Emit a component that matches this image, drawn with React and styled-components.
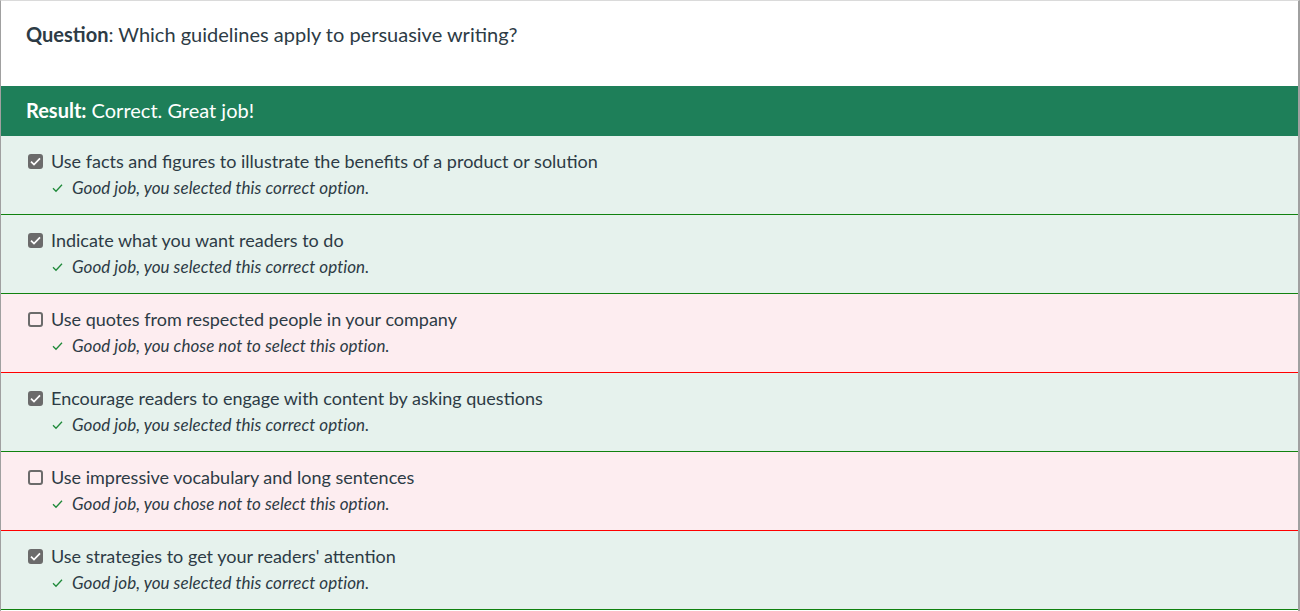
import React from "react";
import styled, { createGlobalStyle } from "styled-components";

const GlobalStyle = createGlobalStyle`
  html, body {
    margin: 0;
    padding: 0;
    background: #ffffff;
    font-family: Lato, "Noto Sans", sans-serif;
    color: #2d3b45;
  }
`;

const Card = styled.div`
  width: 1300px;
  height: 611px;
  box-sizing: border-box;
  border-top: 1px solid #dadada;
  border-left: 1px solid #a0a0a0;
  border-right: 2px solid #a0a0a0;
  display: flex;
  flex-direction: column;
`;

const QuestionBar = styled.div`
  height: 85px;
  box-sizing: border-box;
  padding: 21px 25px 0;
  font-size: 20px;
  line-height: 24px;
  background: #ffffff;
`;

const ResultBar = styled.div`
  height: 50px;
  box-sizing: border-box;
  padding: 0 25px 3px;
  display: flex;
  align-items: center;
  background: #1e7f59;
  color: #ffffff;
  font-size: 20px;
`;

const Row = styled.div`
  height: 79px;
  box-sizing: border-box;
  padding: 13px 25px 0 27px;
  background: ${({ $ok }) => ($ok ? "#e6f2ed" : "#fdedf0")};
  border-bottom: 1px solid ${({ $ok }) => ($ok ? "#11820f" : "#ff0000")};
`;

const OptionLine = styled.div`
  display: flex;
  align-items: center;
  gap: 8px;
  font-size: 18px;
  line-height: 24px;
`;

const Box = styled.span`
  width: 15px;
  height: 15px;
  box-sizing: border-box;
  border-radius: 3px;
  border: 2px solid #6b6b6b;
  background: ${({ $checked }) => ($checked ? "#6b6b6b" : "transparent")};
  display: flex;
  align-items: center;
  justify-content: center;
  flex: none;
`;

const Feedback = styled.div`
  display: flex;
  align-items: center;
  gap: 9px;
  margin-top: 4px;
  padding-left: 24px;
  font-size: 17px;
  letter-spacing: 0.05px;
  line-height: 22px;
  font-style: italic;
`;

const options = [
  { text: "Use facts and figures to illustrate the benefits of a product or solution", checked: true, ok: true },
  { text: "Indicate what you want readers to do", checked: true, ok: true },
  { text: "Use quotes from respected people in your company", checked: false, ok: false },
  { text: "Encourage readers to engage with content by asking questions", checked: true, ok: true },
  { text: "Use impressive vocabulary and long sentences", checked: false, ok: false },
  { text: "Use strategies to get your readers' attention", checked: true, ok: true },
];

const Tick = () => (
  <svg width="11" height="9" viewBox="0 0 11 9">
    <polyline points="1,4.6 4,7.6 10,1.4" fill="none" stroke="#fff" strokeWidth="1.7" />
  </svg>
);

const GreenTick = () => (
  <svg width="11" height="10" viewBox="0 0 11 10">
    <polyline points="1,5.2 4,8.2 10,1.8" fill="none" stroke="#1f8a3a" strokeWidth="1.3" />
  </svg>
);

export default function App() {
  return (
    <>
      <GlobalStyle />
      <Card>
        <QuestionBar>
          <b>Question</b>: Which guidelines apply to persuasive writing?
        </QuestionBar>
        <ResultBar>
          <b>Result:</b>&nbsp;Correct. Great job!
        </ResultBar>
        {options.map((o) => (
          <Row key={o.text} $ok={o.ok}>
            <OptionLine>
              <Box $checked={o.checked}>{o.checked && <Tick />}</Box>
              {o.text}
            </OptionLine>
            <Feedback>
              <GreenTick />
              {o.checked
                ? "Good job, you selected this correct option."
                : "Good job, you chose not to select this option."}
            </Feedback>
          </Row>
        ))}
      </Card>
    </>
  );
}
